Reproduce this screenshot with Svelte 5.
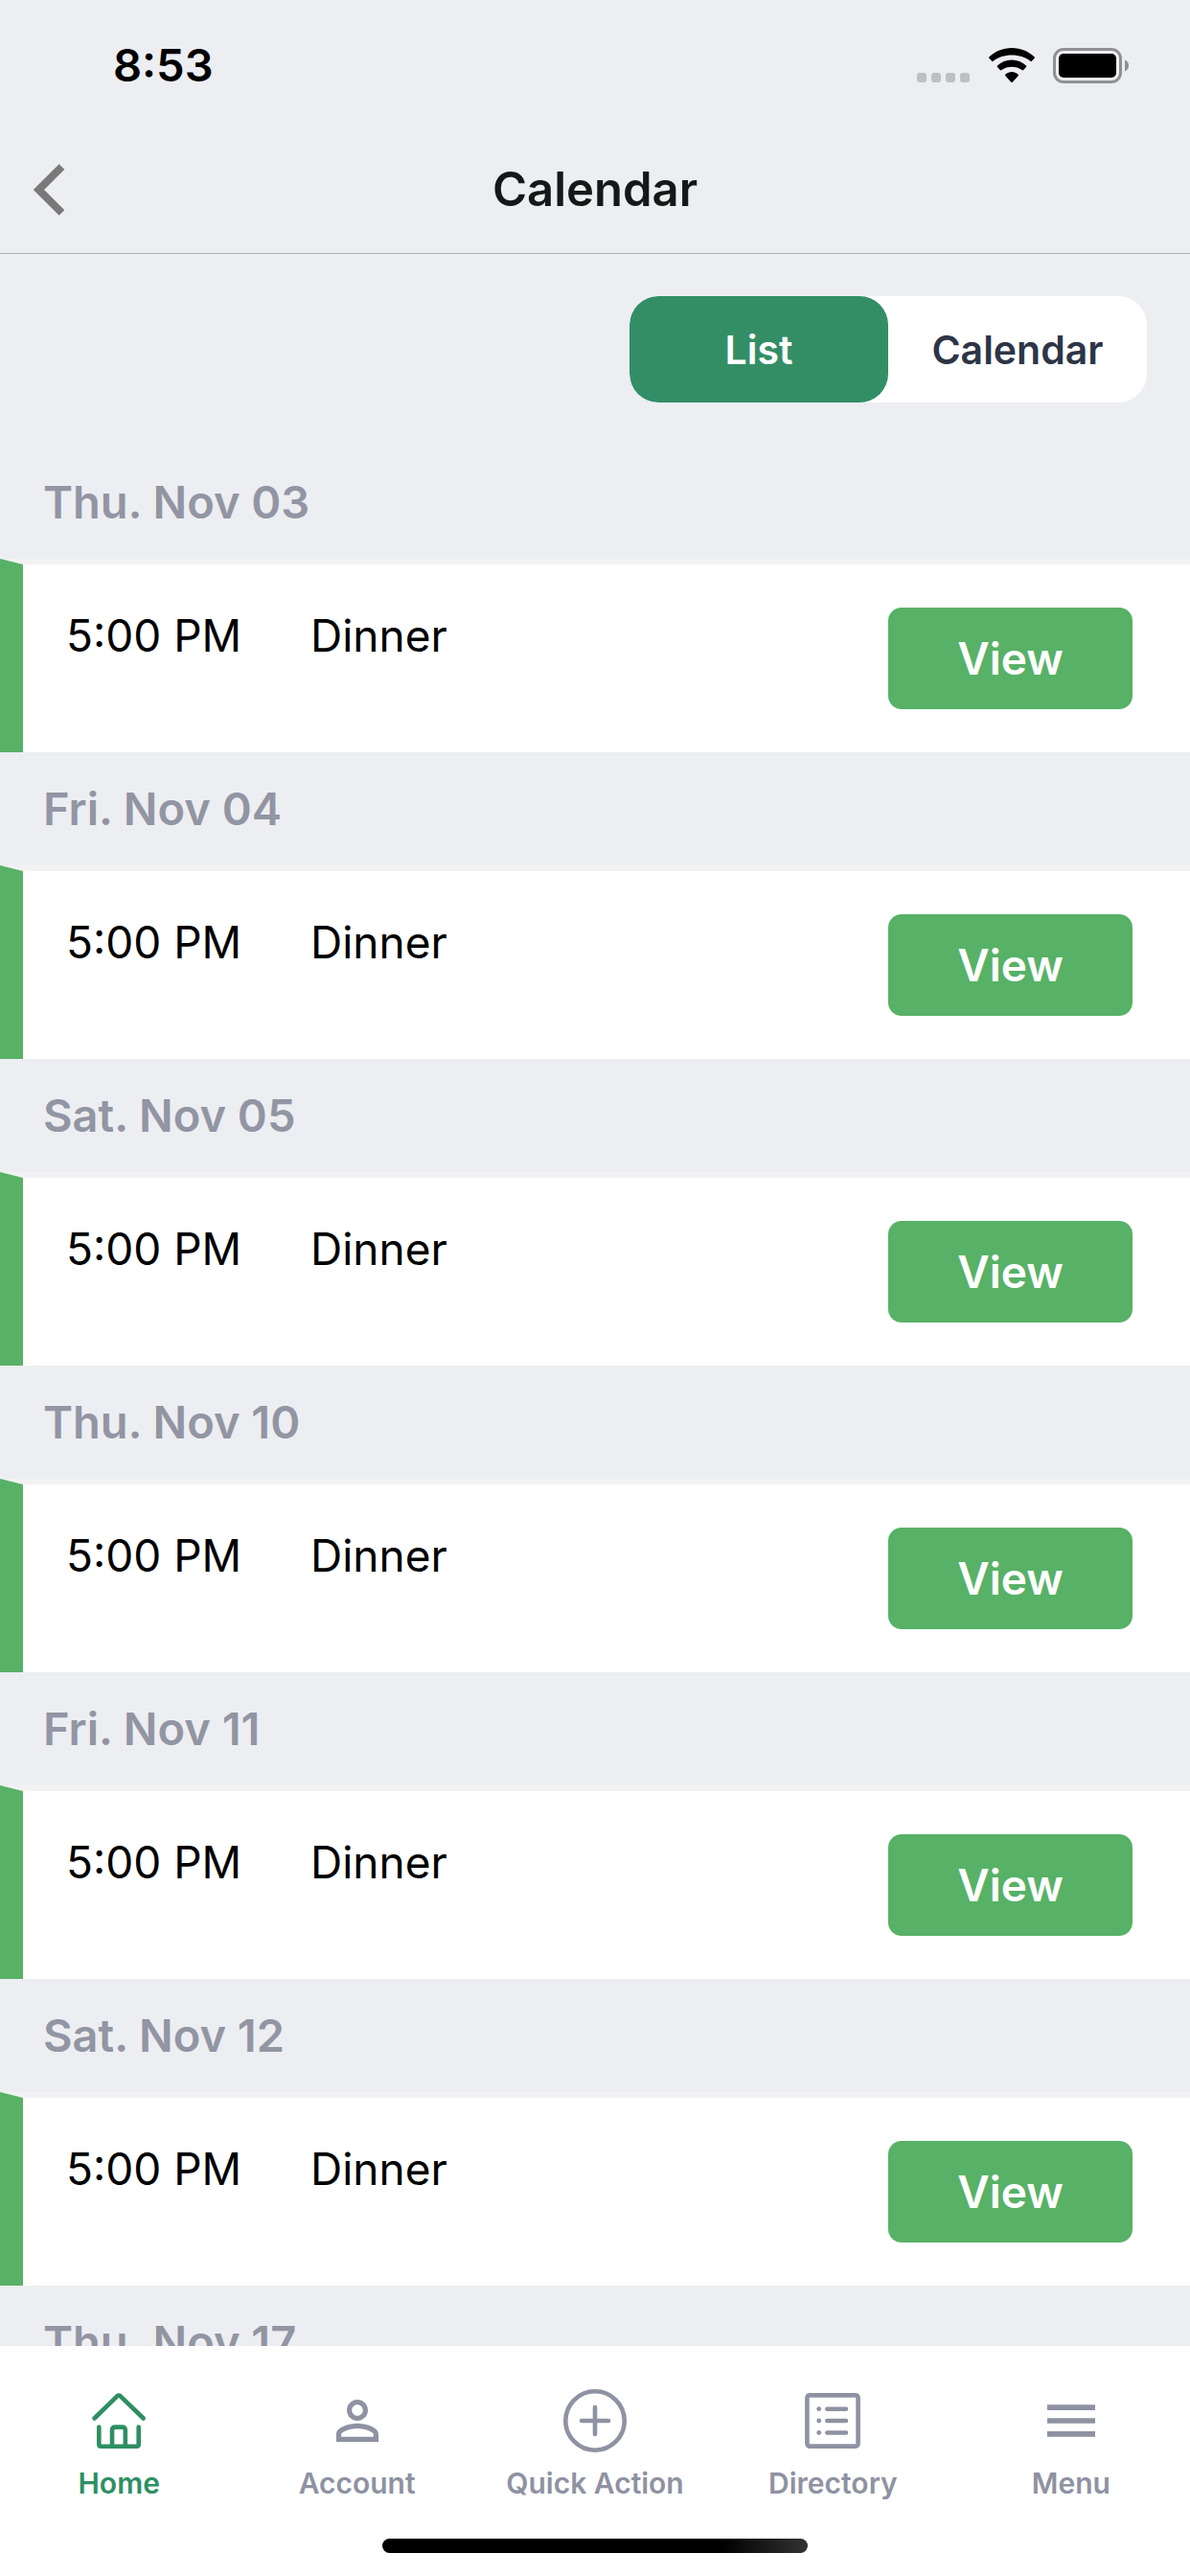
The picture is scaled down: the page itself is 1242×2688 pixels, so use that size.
<script lang="ts">
  type View = 'list' | 'calendar';

  const dinner = { time: '5:00 PM', title: 'Dinner' };

  const days = [
    { date: 'Thu. Nov 03', events: [dinner] },
    { date: 'Fri. Nov 04', events: [dinner] },
    { date: 'Sat. Nov 05', events: [dinner] },
    { date: 'Thu. Nov 10', events: [dinner] },
    { date: 'Fri. Nov 11', events: [dinner] },
    { date: 'Sat. Nov 12', events: [dinner] },
    { date: 'Thu. Nov 17', events: [] },
  ];

  const tabs = [
    { id: 'home', label: 'Home' },
    { id: 'account', label: 'Account' },
    { id: 'quick', label: 'Quick Action' },
    { id: 'directory', label: 'Directory' },
    { id: 'menu', label: 'Menu' },
  ];

  let view = $state<View>('list');
  let activeTab = $state('home');
</script>

<div class="screen">
  <div class="status-bar">
    <span class="clock">8:53</span>
    <div class="status-icons">
      <svg class="cellular" viewBox="0 0 56 37" aria-hidden="true">
        {#each [0, 15, 30, 45] as x}
          <rect {x} y="26" width="10" height="10" rx="3" />
        {/each}
      </svg>
      <svg class="wifi" viewBox="0 0 48 37" aria-hidden="true">
        <path d="M24 0C33 0 41.500 3.500 47.500 9.300Q48.300 10 47.500 10.900L44.800 13.800Q44.200 14.500 43.400 13.800C38.200 9.800 31.400 7.600 24 7.600S9.800 9.800 4.600 13.800Q3.800 14.500 3.200 13.800L.5 10.900Q-.3 10 .5 9.300C6.500 3.500 15 0 24 0Z" />
        <path d="M24 12.500C29.700 12.500 35 14.700 39 18.400Q39.800 19.200 39 20L36.200 23Q35.500 23.800 34.700 23C31.800 20.900 28 19.700 24 19.700S16.200 20.900 13.300 23Q12.500 23.800 11.800 23L9 20Q8.200 19.200 9 18.400C13 14.700 18.300 12.500 24 12.500Z" />
        <path d="M24 25C26.400 25 28.700 25.900 30.500 27.500Q31.400 28.300 30.600 29.200L24.900 35.400Q24 36.400 23.100 35.400L17.400 29.200Q16.600 28.300 17.500 27.500C19.300 25.900 21.600 25 24 25Z" />
      </svg>
      <svg class="battery" viewBox="0 0 80 37" aria-hidden="true">
        <rect class="shell" x="1.500" y="1.500" width="69" height="34" rx="9.500" />
        <rect x="6" y="6" width="60" height="25" rx="5" />
        <path class="cap" d="M75 12.500C77.600 13.600 79 15.800 79 18.500S77.600 23.400 75 24.500Z" />
      </svg>
    </div>
  </div>

  <header class="nav-bar">
    <button class="back" aria-label="Back">
      <svg viewBox="0 0 34 54" aria-hidden="true">
        <path d="M29.500 3L5.500 27L29.500 51" />
      </svg>
    </button>
    <h1>Calendar</h1>
  </header>

  <main>
    <div class="toolbar">
      <div class="segmented">
        <button class:selected={view === 'list'} onclick={() => (view = 'list')}>List</button>
        <button class:selected={view === 'calendar'} onclick={() => (view = 'calendar')}>Calendar</button>
      </div>
    </div>

    {#each days as day}
      <section>
        <h2>{day.date}</h2>
        {#each day.events as event}
          <div class="event">
            <span class="time">{event.time}</span>
            <span class="title">{event.title}</span>
            <button class="view-button">View</button>
          </div>
        {/each}
      </section>
    {/each}
  </main>

  <footer>
    <nav>
      {#each tabs as tab}
        <button class="tab" class:active={activeTab === tab.id} onclick={() => (activeTab = tab.id)}>
          <svg viewBox="0 0 72 72" aria-hidden="true">
            {#if tab.id === 'home'}
              <g class="line">
                <path d="M10.500 33.500L34.300 10.300Q36 8.800 37.700 10.300L61.700 33.500" />
                <path d="M15.300 42.500V60.500Q15.300 62.800 17.600 62.800H54.400Q56.700 62.800 56.700 60.500V42.500" />
                <path d="M29 62V46Q29 42.600 32.400 42.600H39.400Q42.800 42.600 42.800 46V62" />
              </g>
            {:else if tab.id === 'account'}
              <path
                transform="translate(3 3) scale(2.750)"
                d="M12 5.900c1.160 0 2.100.94 2.100 2.100s-.94 2.100-2.100 2.100S9.900 9.160 9.900 8s.94-2.100 2.100-2.100m0 9c2.970 0 6.100 1.460 6.100 2.100v1.100H5.900V17c0-.64 3.130-2.100 6.100-2.100M12 4C9.790 4 8 5.790 8 8s1.790 4 4 4 4-1.790 4-4-1.790-4-4-4zm0 9c-2.670 0-8 1.340-8 4v3h16v-3c0-2.660-5.330-4-8-4z"
              />
            {:else if tab.id === 'quick'}
              <g class="line">
                <circle cx="36" cy="36" r="30.700" />
                <path d="M36 22V50M22 36H50" />
              </g>
            {:else if tab.id === 'directory'}
              <g class="line">
                <rect x="9.400" y="9.400" width="53.200" height="53.200" rx="2.500" />
                <path d="M30.300 23.700H50M30.300 36H50M30.300 48.500H50" />
              </g>
              <circle cx="21.700" cy="23.700" r="2.400" />
              <circle cx="21.700" cy="36" r="2.400" />
              <circle cx="21.700" cy="48.500" r="2.400" />
            {:else}
              <path d="M11 19.300H61V25H11ZM11 33.200H61V38.800H11ZM11 47H61V52.700H11Z" />
            {/if}
          </svg>
          <span>{tab.label}</span>
        </button>
      {/each}
    </nav>
    <div class="home-indicator"></div>
  </footer>
</div>

<style>
  :global(body) {
    margin: 0;
  }

  .screen {
    display: flex;
    flex-direction: column;
    height: 100vh;
    overflow: hidden;
    background: #edeef2;
    color: #000;
    font-family: Inter, 'Liberation Sans', sans-serif;
  }

  button {
    margin: 0;
    padding: 0;
    border: 0;
    background: none;
    color: inherit;
    font: inherit;
    cursor: pointer;
  }

  svg {
    display: block;
    fill: currentColor;
  }

  .status-bar {
    display: flex;
    flex: none;
    justify-content: space-between;
    align-items: center;
    height: 132px;
    padding: 4px 63px 0 118px;
    box-sizing: border-box;
  }

  .clock {
    font-size: 47px;
    font-weight: 600;
    line-height: 60px;
  }

  .status-icons {
    display: flex;
    gap: 19px;
  }

  .status-icons svg {
    height: 37px;
  }

  .cellular {
    color: #bebfc3;
  }

  .battery .shell {
    fill: none;
    stroke: #8f9093;
    stroke-width: 3;
  }

  .battery .cap {
    fill: #8f9093;
  }

  .nav-bar {
    display: grid;
    flex: none;
    grid-template-columns: 1fr auto 1fr;
    align-items: center;
    height: 133px;
    padding: 0 35px;
    box-sizing: border-box;
    border-bottom: 1px solid #b0b1b5;
  }

  .back {
    justify-self: start;
  }

  .back svg {
    width: 34px;
    height: 54px;
    fill: none;
    stroke: #797979;
    stroke-width: 8;
  }

  h1 {
    margin: 0;
    color: #161817;
    font-size: 49px;
    font-weight: 600;
    line-height: 60px;
  }

  main {
    flex: 1;
    min-height: 0;
    overflow: hidden;
  }

  .toolbar {
    display: flex;
    justify-content: flex-end;
    padding: 44px 45px 45px;
  }

  .segmented {
    display: grid;
    grid-template-columns: 270px 270px;
    overflow: hidden;
    border-radius: 30px;
    background: #fff;
  }

  .segmented button {
    height: 111px;
    border-radius: 30px;
    color: #2d3547;
    font-size: 41px;
    font-weight: 600;
  }

  .segmented .selected {
    background: #338e66;
    color: #fff;
  }

  h2 {
    margin: 0;
    padding: 29px 45px;
    color: #9295a3;
    font-size: 47px;
    font-weight: 600;
    line-height: 60px;
  }

  .event {
    display: flex;
    align-items: flex-start;
    padding: 45px 60px 45px 45px;
    border-top: 6px solid #f2f2f2;
    border-left: 24px solid #57b166;
    background: #fff;
    font-size: 46px;
    line-height: 58px;
  }

  .time {
    width: 255px;
  }

  .title {
    flex: 1;
  }

  .view-button {
    width: 255px;
    height: 106px;
    border-radius: 14px;
    background: #57b166;
    color: #fff;
    font-weight: 600;
  }

  footer {
    display: flex;
    flex: none;
    flex-direction: column;
    align-items: center;
    padding-bottom: 24px;
    background: #fff;
  }

  nav {
    display: grid;
    grid-template-columns: repeat(5, 1fr);
    width: 100%;
    padding: 42px 0 38px;
  }

  .tab {
    display: flex;
    flex-direction: column;
    align-items: center;
    gap: 9px;
    color: #8e92a2;
    font-size: 30px;
    font-weight: 600;
    line-height: 40px;
  }

  .tab.active {
    color: #2e8f63;
  }

  .tab svg {
    width: 72px;
    height: 72px;
  }

  .line {
    fill: none;
    stroke: currentColor;
    stroke-width: 4.6;
    stroke-linecap: round;
    stroke-linejoin: round;
  }

  .home-indicator {
    width: 444px;
    height: 15px;
    border-radius: 8px;
    background: linear-gradient(to right, #000 80%, #333);
  }
</style>
